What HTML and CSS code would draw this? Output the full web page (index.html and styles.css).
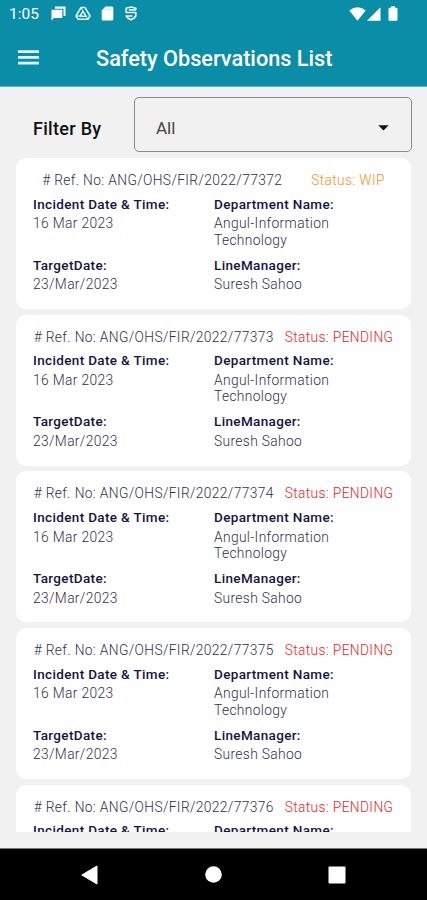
FILE: index.html
```html
<!DOCTYPE html>
<html lang="en">
<head>
<meta charset="utf-8">
<title>Safety Observations List</title>
<link rel="stylesheet" href="styles.css">
</head>
<body>
<div class="statusbar">
  <span class="clock">1:05</span>
  <svg class="chat" width="15" height="15" viewBox="0 0 15 15"><path d="M4 .5H14.500V10H12.500V2.800H4Z" fill="#fff"/><path d="M0.500 3.800H11.300V12H3L0.500 14.500Z" fill="#fff"/></svg>
  <svg class="drive" width="16" height="15" viewBox="0 0 16 15" fill="none" stroke="#e8f6f8" stroke-width="1.500" stroke-linejoin="round"><path d="M6 1.500H10L15 10L13 13.200H3L1 10Z"/><path d="M8 5.300L11 10.200H5Z"/><path d="M6 1.500L8 5.300M1 10H5M13 13.200L11 10.200" stroke-width="1"/></svg>
  <svg class="sd" width="13" height="15" viewBox="0 0 13 15"><path d="M4.500 .5H11Q12.300 .5 12.300 2V13Q12.300 14.500 11 14.500H2Q.7 14.500 .7 13V4.500Z" fill="#fff"/><path d="M5 2.500V4.500M7.300 2.500V4.500M9.600 2.500V4.500" stroke="#9bd0da" stroke-width=".8"/></svg>
  <svg class="shield" width="12" height="15" viewBox="0 0 12 15" fill="none" stroke="#e8f6f8" stroke-width="1.700" stroke-linejoin="round"><path d="M10.800 4V2.200L6 1L1.200 2.200V6.500H10.800V10Q9.500 12.300 6 13.800Q2.500 12.300 1.200 10H7.500M4 3.800H10.800"/></svg>
  <span class="signals">
    <svg width="17" height="14" viewBox="0 0 17 14"><path d="M.3 3.500Q8.500 -2.800 16.700 3.500L8.500 13.700Z" fill="#fff"/></svg>
    <svg width="14" height="14" viewBox="0 0 14 14"><path d="M13.500 .2V13.700H0Z" fill="#fff"/></svg>
    <svg class="battery" width="10" height="15" viewBox="0 0 10 15"><path d="M3 .3H7V1.700H8.500Q9.500 1.700 9.500 2.700V13.500Q9.500 14.700 8.500 14.700H1.500Q.5 14.700 .5 13.500V2.700Q.5 1.700 1.500 1.700H3Z" fill="#fff"/></svg>
  </span>
</div>
<header class="appbar">
  <svg width="21" height="15" viewBox="0 0 21 15"><path d="M0 1.600H21M0 7.400H21M0 13.200H21" stroke="#e3f3f6" stroke-width="2.800"/></svg>
  <h1>Safety Observations List</h1>
</header>
<div class="filter">
  <span class="filter-label">Filter By</span>
  <div class="select"><span>All</span><svg width="11" height="6" viewBox="0 0 11 6"><path d="M.3 .2H10.700L5.500 5.600Z" fill="#111"/></svg></div>
</div>
<main class="list">
  <article class="card">
    <div class="head spread"><span>#&nbsp;Ref. No: ANG/OHS/FIR/2022/77372</span><span class="wip">Status: WIP</span></div>
    <dl><div><dt>Incident Date &amp; Time:</dt><dd>16 Mar 2023</dd></div><div><dt>Department Name:</dt><dd>Angul-Information<br>Technology</dd></div><div><dt>TargetDate:</dt><dd>23/Mar/2023</dd></div><div><dt>LineManager:</dt><dd>Suresh Sahoo</dd></div></dl>
  </article>
  <article class="card">
    <div class="head"><span>#&nbsp;Ref. No: ANG/OHS/FIR/2022/77373</span><span class="pending">Status: PENDING</span></div>
    <dl><div><dt>Incident Date &amp; Time:</dt><dd>16 Mar 2023</dd></div><div><dt>Department Name:</dt><dd>Angul-Information<br>Technology</dd></div><div><dt>TargetDate:</dt><dd>23/Mar/2023</dd></div><div><dt>LineManager:</dt><dd>Suresh Sahoo</dd></div></dl>
  </article>
  <article class="card">
    <div class="head"><span>#&nbsp;Ref. No: ANG/OHS/FIR/2022/77374</span><span class="pending">Status: PENDING</span></div>
    <dl><div><dt>Incident Date &amp; Time:</dt><dd>16 Mar 2023</dd></div><div><dt>Department Name:</dt><dd>Angul-Information<br>Technology</dd></div><div><dt>TargetDate:</dt><dd>23/Mar/2023</dd></div><div><dt>LineManager:</dt><dd>Suresh Sahoo</dd></div></dl>
  </article>
  <article class="card">
    <div class="head"><span>#&nbsp;Ref. No: ANG/OHS/FIR/2022/77375</span><span class="pending">Status: PENDING</span></div>
    <dl><div><dt>Incident Date &amp; Time:</dt><dd>16 Mar 2023</dd></div><div><dt>Department Name:</dt><dd>Angul-Information<br>Technology</dd></div><div><dt>TargetDate:</dt><dd>23/Mar/2023</dd></div><div><dt>LineManager:</dt><dd>Suresh Sahoo</dd></div></dl>
  </article>
  <article class="card">
    <div class="head"><span>#&nbsp;Ref. No: ANG/OHS/FIR/2022/77376</span><span class="pending">Status: PENDING</span></div>
    <dl><div><dt>Incident Date &amp; Time:</dt></div><div><dt>Department Name:</dt></div></dl>
  </article>
</main>
<nav class="navbar">
  <svg width="17" height="20" viewBox="0 0 17 20"><path d="M16 1V19L.8 10Z" fill="#fff" stroke="#fff" stroke-linejoin="round"/></svg>
  <svg width="17" height="17" viewBox="0 0 17 17"><circle cx="8.500" cy="8.500" r="8.300" fill="#fff"/></svg>
  <svg width="18" height="18" viewBox="0 0 18 18"><rect x=".5" y=".5" width="17" height="17" rx="1" fill="#fff"/></svg>
</nav>
</body>
</html>
```
FILE: styles.css
```css
* { box-sizing: border-box; }
body {
  margin: 0;
  width: 427px;
  height: 900px;
  display: flex;
  flex-direction: column;
  overflow: hidden;
  background: #f1f1f1;
  font-family: Roboto, sans-serif;
}
svg { display: block; flex: none; }
.statusbar {
  height: 29px;
  flex: none;
  display: flex;
  align-items: center;
  padding: 0 29px 2px 9px;
  background: #0a8da6;
  color: #fff;
}
.clock { width: 42px; padding-top: 1px; font-size: 15.500px; line-height: 27px; }
.drive { margin-left: 9px; }
.sd { margin-left: 10px; }
.shield { margin-left: 11px; }
.signals { margin-left: auto; display: flex; align-items: center; gap: 1px; }
.battery { margin-left: 6px; }
.appbar {
  height: 58px;
  flex: none;
  display: flex;
  align-items: center;
  gap: 57px;
  padding: 0 18px;
  background: #0a8da6;
  border-bottom: 1px solid #65b5c4;
}
.appbar h1 { margin: 0; padding-top: 2px; color: #fff; font-size: 21.700px; font-weight: 500; line-height: 28px; white-space: nowrap; }
.filter {
  height: 71px;
  flex: none;
  display: flex;
  padding: 10px 15.500px 6px 33px;
}
.filter-label { width: 101px; color: #111; font-size: 18px; font-weight: 500; line-height: 64px; letter-spacing: .3px; }
.select {
  flex: 1;
  display: flex;
  align-items: center;
  justify-content: space-between;
  padding: 7px 22px 0 21px;
  border: 1px solid #8b8b8b;
  border-radius: 5px;
  color: #444;
  font-size: 17px;
}
.list {
  height: 674px;
  flex: none;
  display: flex;
  flex-direction: column;
  gap: 5.700px;
  overflow: hidden;
  padding: 0 16px;
  color: #30304a;
  font-size: 13.800px;
  font-weight: 300;
  line-height: 16.500px;
  letter-spacing: .35px;
}
.card {
  height: 151px;
  flex: none;
  padding: 14px 17px 0;
  background: #fff;
  border-radius: 10px;
}
.head { display: flex; justify-content: center; gap: 11px; white-space: nowrap; margin: 0 -17px; }
.head.spread { justify-content: center; gap: 29px; }
.wip { color: #f5921e; }
.pending { color: #f52020; }
dl {
  display: grid;
  grid-template-columns: 181px 1fr;
  grid-template-rows: 61px auto;
  margin: 7px 0 0;
}
dt { color: #14143f; font-size: 13.500px; font-weight: 500; letter-spacing: .35px; }
dd { margin: 3.200px 0 0; }
.navbar {
  flex: 1;
  margin-top: 16px;
  display: flex;
  align-items: center;
  justify-content: space-between;
  padding: 0 81px 0 81px;
  background: #000;
  border-top: 1px solid #777;
}
```
